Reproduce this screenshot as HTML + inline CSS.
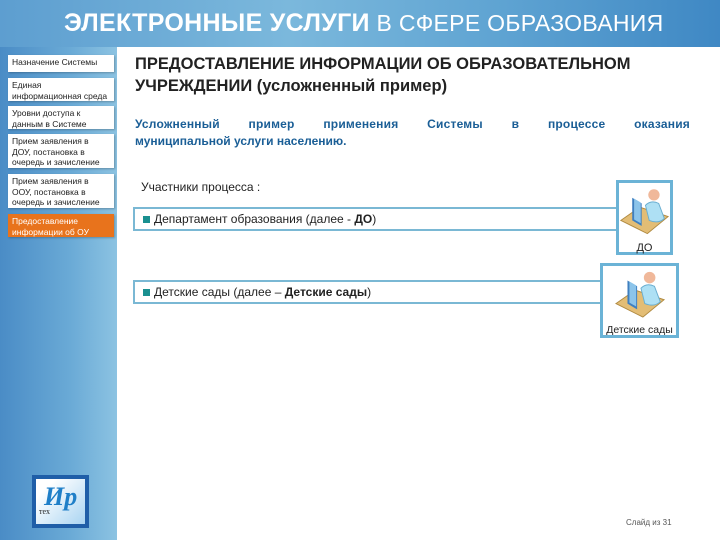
<!DOCTYPE html>
<html><head><meta charset="utf-8"><style>
*{margin:0;padding:0;box-sizing:border-box}
body{width:720px;height:540px;position:relative;overflow:hidden;background:#fff;font-family:"Liberation Sans",sans-serif}
.hdr{position:absolute;left:0;top:0;width:720px;height:47px;background:linear-gradient(90deg,#5d9ed0 0%,#7bb8dc 40%,#5ea3d2 70%,#3f88c4 100%)}
.hdr div{position:absolute;left:64px;top:9px;color:#fff;font-size:23px;white-space:nowrap;letter-spacing:0.3px}
.hdr b{font-size:25px}
.side{position:absolute;left:0;top:47px;width:117px;height:493px;background:linear-gradient(90deg,#4a8cc6 0%,#6aaad6 60%,#8cc3e2 100%)}
.it{position:absolute;left:8px;width:106px;background:#fff;font-size:8.5px;line-height:10.5px;color:#222;padding:2px 2px 2px 4px;white-space:nowrap;overflow:hidden;box-shadow:1px 1px 2px rgba(0,0,0,.25)}
.it.on{background:#e8731c;color:#fff}
.t1{position:absolute;left:135px;top:53px;font-size:16.5px;font-weight:bold;color:#222;line-height:22px;width:580px}
.t2{position:absolute;left:135px;top:116px;width:555px;font-size:12px;font-weight:bold;color:#1a5e96;line-height:17px}
.t2 .j{text-align:justify;text-align-last:justify;letter-spacing:0.2px}
.t3{position:absolute;left:141px;top:180px;font-size:12px;color:#222}
.band{position:absolute;left:133px;height:24px;border:2px solid #7ab8d4;background:#fff;font-size:12px;color:#222;padding:3px 0 0 8px}
.band i{display:inline-block;width:7px;height:7px;background:#1a9090;margin-right:4px}
.box{position:absolute;border:3px solid #6bb3d6;background:#fff;text-align:center;font-size:11px;color:#222}
.foot{position:absolute;left:626px;top:518px;font-size:8px;color:#555}
.logo{position:absolute;left:32px;top:475px;width:57px;height:53px;background:#1f5ea8;padding:4px}
.logo div{width:100%;height:100%;background:linear-gradient(135deg,#fff 20%,#a9d4f2);position:relative}
.logo span{position:absolute;left:8px;top:3px;font:italic bold 26px "Liberation Serif",serif;color:#1f7fc8}
.logo em{position:absolute;left:3px;top:28px;font:8px "Liberation Serif",serif;color:#222;font-style:normal}
</style></head><body>
<div class="hdr"><div><b>ЭЛЕКТРОННЫЕ УСЛУГИ</b> В СФЕРЕ ОБРАЗОВАНИЯ</div></div>
<div class="side"></div>
<div class="it" style="top:55px;height:17px">Назначение Системы</div>
<div class="it" style="top:78px;height:23px">Единая<br>информационная среда</div>
<div class="it" style="top:106px;height:23px">Уровни доступа к<br>данным в Системе</div>
<div class="it" style="top:134px;height:34px">Прием заявления в<br>ДОУ, постановка в<br>очередь и зачисление</div>
<div class="it" style="top:174px;height:34px">Прием заявления в<br>ООУ, постановка в<br>очередь и зачисление</div>
<div class="it on" style="top:214px;height:23px">Предоставление<br>информации об ОУ</div>
<div class="t1">ПРЕДОСТАВЛЕНИЕ ИНФОРМАЦИИ ОБ ОБРАЗОВАТЕЛЬНОМ УЧРЕЖДЕНИИ (усложненный пример)</div>
<div class="t2"><div class="j">Усложненный пример применения Системы в процессе оказания</div><div>муниципальной услуги населению.</div></div>
<div class="t3">Участники процесса :</div>
<div class="band" style="top:207px;width:485px"><i></i>Департамент образования (далее - <b>ДО</b>)</div>
<div class="band" style="top:280px;width:469px"><i></i>Детские сады (далее – <b>Детские сады</b>)</div>
<svg width="0" height="0" style="position:absolute"><defs><g id="ic">
<polygon points="2,38 22,24 52,34 30,52" fill="#e3bd75" stroke="#b08a40" stroke-width="1"/>
<polygon points="14,14 24,20 24,44 14,38" fill="#3f7fbf"/>
<polygon points="16,15 23,19 23,41 16,37" fill="#8cc4ea"/>
<path d="M28,22 q6,-6 14,-2 l6,16 q-6,6 -16,2 z" fill="#aee0f4" stroke="#6aaed0"/>
<circle cx="37" cy="11" r="6" fill="#f0b89a"/>
</g></defs></svg>
<div class="box" style="left:616px;top:180px;width:57px;height:75px"><svg width="51" height="54" viewBox="0 0 54 54"><use href="#ic"/></svg><div style="margin-top:2px">ДО</div></div>
<div class="box" style="left:600px;top:263px;width:79px;height:75px"><svg width="52" height="54" viewBox="0 0 54 54"><use href="#ic"/></svg><div style="margin-top:1px;font-size:10.5px">Детские сады</div></div>
<div class="logo"><div><span>Ир</span><em>тех</em></div></div>
<div class="foot">Слайд из 31</div>
</body></html>
